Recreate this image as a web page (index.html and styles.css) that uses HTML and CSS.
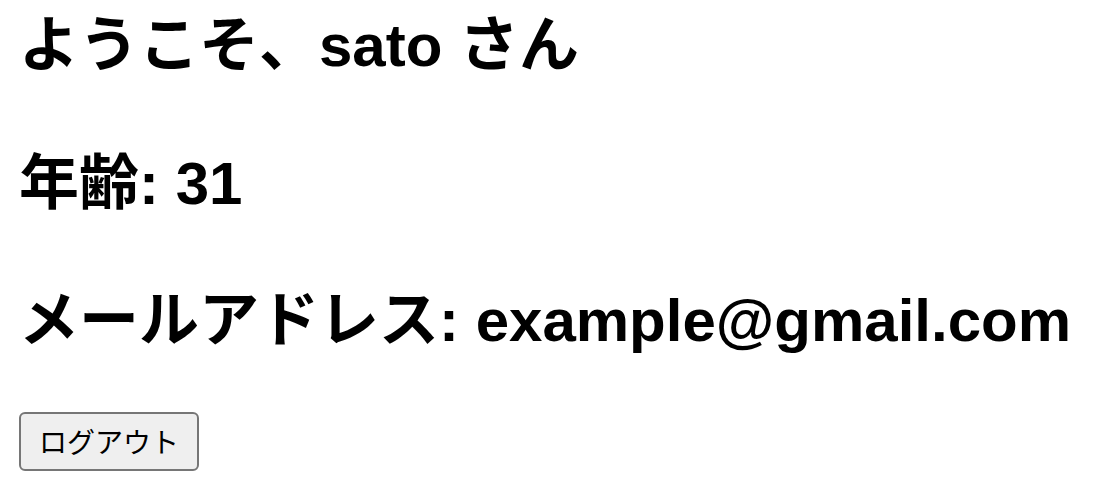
FILE: index.html
```html
<!DOCTYPE html>
<html lang="ja">
<head>
<meta charset="utf-8">
<title>マイページ</title>
<link rel="stylesheet" href="styles.css">
</head>
<body>
<main class="profile">
  <h1 class="line">ようこそ、sato さん</h1>
  <h1 class="line">年齢: 31</h1>
  <h1 class="line">メールアドレス: example@gmail.com</h1>
  <div class="actions">
    <button class="logout" type="button">ログアウト</button>
  </div>
</main>
</body>
</html>
```
FILE: styles.css
```css
html, body {
  margin: 0;
  padding: 0;
  background: #ffffff;
  color: #000000;
}

.profile {
  padding: 6px 19px 0 19px;
  font-family: "Liberation Sans", "Noto Sans CJK JP", sans-serif;
}

.line {
  margin: 0;
  font-size: 60px;
  line-height: 80px;
  font-weight: 700;
  white-space: nowrap;
}

.line + .line {
  margin-top: 57.5px;
}

.actions {
  margin-top: 51px;
}

.logout {
  font-family: "Noto Sans CJK JP", "Liberation Sans", sans-serif;
  font-size: 28px;
  line-height: 41px;
  padding: 7px 18px;
  margin: 0;
  color: #000000;
  background: #efefef;
  border: 2px solid #767676;
  border-radius: 6px;
}
```
